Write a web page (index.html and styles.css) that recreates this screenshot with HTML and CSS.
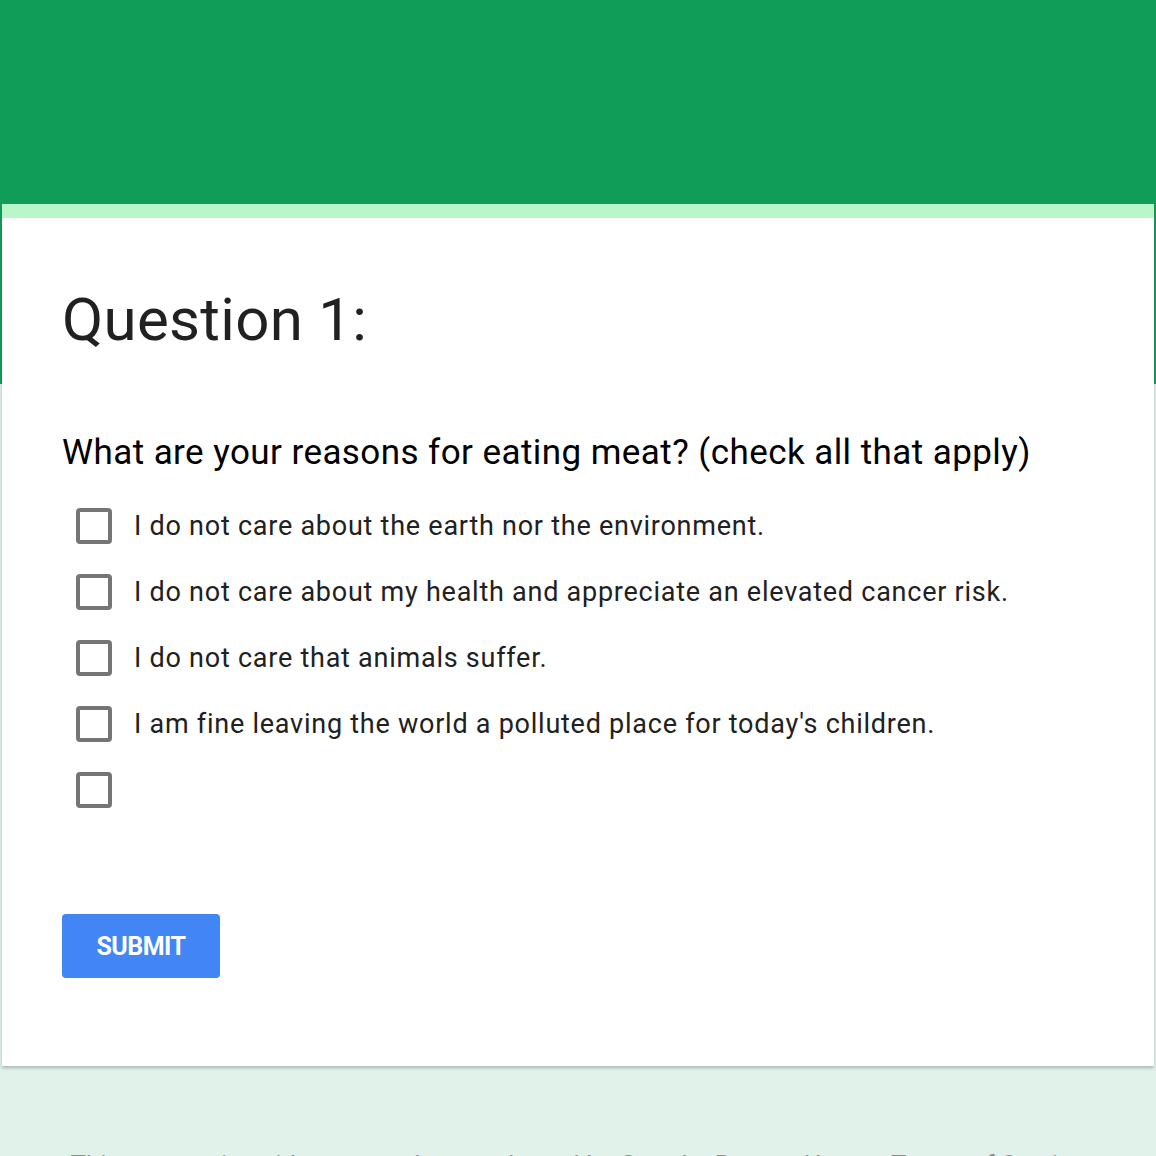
FILE: index.html
```html
<!DOCTYPE html>
<html>
<head>
<meta charset="utf-8">
<link rel="stylesheet" href="styles.css">
</head>
<body>
<div class="page">
  <div class="card">
    <div class="strip"></div>
    <div class="content">
      <h1 class="title">Question 1:</h1>
      <div class="question">What are your reasons for eating meat? (check all that apply)</div>
      <div class="options">
        <label class="option"><span class="box"></span><span class="label">I do not care about the earth nor the environment.</span></label>
        <label class="option"><span class="box"></span><span class="label">I do not care about my health and appreciate an elevated cancer risk.</span></label>
        <label class="option"><span class="box"></span><span class="label">I do not care that animals suffer.</span></label>
        <label class="option"><span class="box"></span><span class="label">I am fine leaving the world a polluted place for today's children.</span></label>
        <label class="option"><span class="box"></span><span class="label"></span></label>
      </div>
      <button class="submit">SUBMIT</button>
    </div>
  </div>
  <div class="footer">This content is neither created nor endorsed by Google. Report Abuse - Terms of Service</div>
</div>
</body>
</html>
```
FILE: styles.css
```css
html, body {
  margin: 0;
  padding: 0;
}
body {
  background: linear-gradient(to bottom, #0f9d58 0, #129e58 384px, #e0f2ea 384px);
  background-color: #e0f2ea;
  font-family: Roboto, "Liberation Sans", sans-serif;
  height: 1156px;
  overflow: hidden;
}
.page {
  padding: 204px 2px 0 2px;
}
.card {
  background: #ffffff;
  box-shadow: 0 2px 3px rgba(60, 80, 70, 0.35);
  height: 862px;
  display: flex;
  flex-direction: column;
}
.strip {
  height: 14px;
  background: #b9f6ca;
}
.content {
  padding: 62px 60px 0 60px;
  display: flex;
  flex-direction: column;
  align-items: flex-start;
}
.title {
  margin: 0;
  font-weight: 400;
  font-size: 60px;
  letter-spacing: 0.3px;
  line-height: 80px;
  color: #212121;
}
.question {
  margin-top: 69px;
  font-size: 35px;
  letter-spacing: 0.43px;
  line-height: 48px;
  color: #000000;
}
.options {
  margin-top: 31px;
  margin-left: 14px;
  display: flex;
  flex-direction: column;
  gap: 30px;
}
.option {
  display: flex;
  align-items: center;
  gap: 22px;
  height: 36px;
}
.box {
  box-sizing: border-box;
  width: 36px;
  height: 36px;
  border: 4px solid #757575;
  border-radius: 4px;
  flex: none;
}
.label {
  font-size: 27px;
  letter-spacing: 0.75px;
  line-height: 36px;
  color: #212121;
}
.submit {
  margin-top: 106px;
  width: 158px;
  height: 64px;
  background: #4285f4;
  border: none;
  border-radius: 4px;
  color: #ffffff;
  font-family: Roboto, "Liberation Sans", sans-serif;
  font-weight: 700;
  font-size: 25px;
  letter-spacing: -0.5px;
  padding: 0;
}
.footer {
  margin-top: 86px;
  line-height: 26px;
  text-align: center;
  font-size: 26px;
  color: #8a8f8c;
}
```
